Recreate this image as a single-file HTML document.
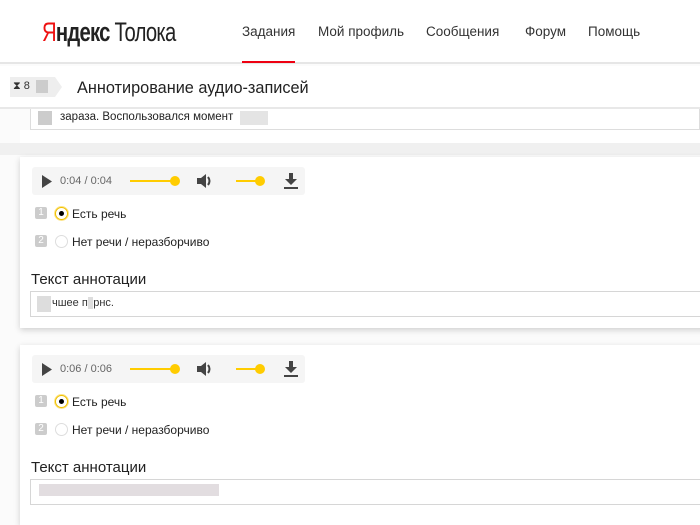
<!DOCTYPE html>
<html><head><meta charset="utf-8"><style>
*{margin:0;padding:0;box-sizing:border-box}
body{width:700px;height:512px;overflow:hidden;background:#fbfbfb;font-family:"Liberation Sans",Arial,sans-serif;position:relative;color:#222}
.a{position:absolute}
.nav{font-size:13.5px;color:#333;top:24px}
.card{position:absolute;left:20px;width:700px;background:#fff;box-shadow:0 2px 6px rgba(0,0,0,.18)}
.player{position:absolute;left:12px;top:10px;width:273px;height:28px;background:#f5f5f5;border-radius:3px}
.t{font-size:11px;color:#666}
.line{position:absolute;height:2px;background:#ffcc00}
.dot{position:absolute;width:10px;height:10px;border-radius:50%;background:#ffcc00}
.num{position:absolute;width:12px;height:12px;background:#ccc;color:#fff;font-size:10px;text-align:center;line-height:12px;border-radius:2px}
.rad{position:absolute;width:13px;height:13px;border-radius:50%;border:1px solid #ddd;background:#fff}
.lbl{position:absolute;font-size:12px;color:#222}
.inp{position:absolute;left:10px;width:680px;height:26px;border:1px solid #d6d6d6;background:#fff}
.blur{position:absolute;background:#ddd}
</style></head><body>
<div class="a" style="left:0;top:0;width:700px;height:64px;background:#fff;border-bottom:2px solid #e6e6e6"></div>
<div class="a" style="left:42px;top:17px;font-size:27px;letter-spacing:-1px;transform:scaleX(.75);transform-origin:left;white-space:nowrap"><span style="color:#e11;">Я</span><b style="font-weight:bold">ндекс</b> <span style="font-weight:normal">Толока</span></div>
<div class="a nav" style="left:242px">Задания</div>
<div class="a nav" style="left:318px">Мой профиль</div>
<div class="a nav" style="left:426px">Сообщения</div>
<div class="a nav" style="left:525px">Форум</div>
<div class="a nav" style="left:588px">Помощь</div>
<div class="a" style="left:242px;top:61px;width:53px;height:2px;background:#e01"></div>
<div class="a" style="left:0;top:66px;width:700px;height:43px;background:#fff;border-bottom:2px solid #e8e8e8"></div>
<div class="a" style="left:10px;top:77px;width:45px;height:20px;background:#eee"></div>
<div class="a" style="left:55px;top:77px;width:0;height:0;border-top:10px solid transparent;border-bottom:10px solid transparent;border-left:7px solid #eee"></div>
<div class="a" style="left:13px;top:80px;font-size:11px;color:#333">⧗ 8</div>
<div class="a" style="left:36px;top:80px;width:12px;height:13px;background:#ccc"></div>
<div class="a" style="left:77px;top:79px;font-size:16.3px;color:#222">Аннотирование аудио-записей</div>
<div class="a" style="left:30px;top:109px;width:670px;height:21px;background:#fff;border:1px solid #ddd;border-top:none"></div>
<div class="a" style="left:38px;top:111px;width:14px;height:14px;background:#ccc"></div>
<div class="a" style="left:60px;top:111px;font-size:11.5px">зараза. Воспользовался момент</div>
<div class="a" style="left:240px;top:111px;width:28px;height:14px;background:#e4e4e4"></div>
<div class="a" style="left:20px;top:130px;width:680px;height:13px;background:#fff"></div>
<div class="a" style="left:0;top:143px;width:700px;height:12px;background:#f0f0f0"></div>

<div class="card" style="top:157px;height:171px">
 <div class="player">
  <svg class="a" style="left:9px;top:8px" width="12" height="13"><path d="M1 0L11 6.5L1 13Z" fill="#444"/></svg>
  <div class="a t" style="left:28px;top:8px">0:04 / 0:04</div>
  <div class="line" style="left:98px;top:13px;width:45px"></div><div class="dot" style="left:138px;top:9px"></div>
  <svg class="a" style="left:164px;top:6px" width="18" height="16"><path d="M1 5H5L10 1V15L5 11H1Z" fill="#444"/><path d="M12 4Q15 8 12 12" stroke="#444" stroke-width="2" fill="none"/></svg>
  <div class="line" style="left:204px;top:13px;width:24px"></div><div class="dot" style="left:223px;top:9px"></div>
  <svg class="a" style="left:252px;top:6px" width="14" height="16"><path d="M5 0H9V6H13L7 12L1 6H5Z" fill="#444"/><rect x="0" y="14" width="14" height="2" fill="#444"/></svg>
 </div>
 <div class="num" style="left:15px;top:50px">1</div>
 <div class="rad" style="left:35px;top:50px;border-color:#f0c000;box-shadow:0 0 0 1px #fde58a"></div><div class="a" style="left:39px;top:54px;width:5px;height:5px;border-radius:50%;background:#000"></div>
 <div class="lbl" style="left:52px;top:50px">Есть речь</div>
 <div class="num" style="left:15px;top:78px">2</div>
 <div class="rad" style="left:35px;top:78px"></div>
 <div class="lbl" style="left:52px;top:78px">Нет речи / неразборчиво</div>
 <div class="a" style="left:11px;top:114px;font-size:15px">Текст аннотации</div>
 <div class="inp" style="top:134px"></div>
 <div class="blur" style="left:17px;top:139px;width:14px;height:16px"></div>
 <div class="a" style="left:32px;top:140px;font-size:11px;color:#333">чшее п<span style="background:#ddd;color:#ddd">у</span>рнс.</div>
</div>

<div class="card" style="top:345px;height:180px">
 <div class="player">
  <svg class="a" style="left:9px;top:8px" width="12" height="13"><path d="M1 0L11 6.5L1 13Z" fill="#444"/></svg>
  <div class="a t" style="left:28px;top:8px">0:06 / 0:06</div>
  <div class="line" style="left:98px;top:13px;width:45px"></div><div class="dot" style="left:138px;top:9px"></div>
  <svg class="a" style="left:164px;top:6px" width="18" height="16"><path d="M1 5H5L10 1V15L5 11H1Z" fill="#444"/><path d="M12 4Q15 8 12 12" stroke="#444" stroke-width="2" fill="none"/></svg>
  <div class="line" style="left:204px;top:13px;width:24px"></div><div class="dot" style="left:223px;top:9px"></div>
  <svg class="a" style="left:252px;top:6px" width="14" height="16"><path d="M5 0H9V6H13L7 12L1 6H5Z" fill="#444"/><rect x="0" y="14" width="14" height="2" fill="#444"/></svg>
 </div>
 <div class="num" style="left:15px;top:50px">1</div>
 <div class="rad" style="left:35px;top:50px;border-color:#f0c000;box-shadow:0 0 0 1px #fde58a"></div><div class="a" style="left:39px;top:54px;width:5px;height:5px;border-radius:50%;background:#000"></div>
 <div class="lbl" style="left:52px;top:50px">Есть речь</div>
 <div class="num" style="left:15px;top:78px">2</div>
 <div class="rad" style="left:35px;top:78px"></div>
 <div class="lbl" style="left:52px;top:78px">Нет речи / неразборчиво</div>
 <div class="a" style="left:11px;top:114px;font-size:15px">Текст аннотации</div>
 <div class="inp" style="top:134px"></div>
 <div class="blur" style="left:19px;top:139px;width:180px;height:12px;background:#e2dde0"></div>
</div>
</body></html>
